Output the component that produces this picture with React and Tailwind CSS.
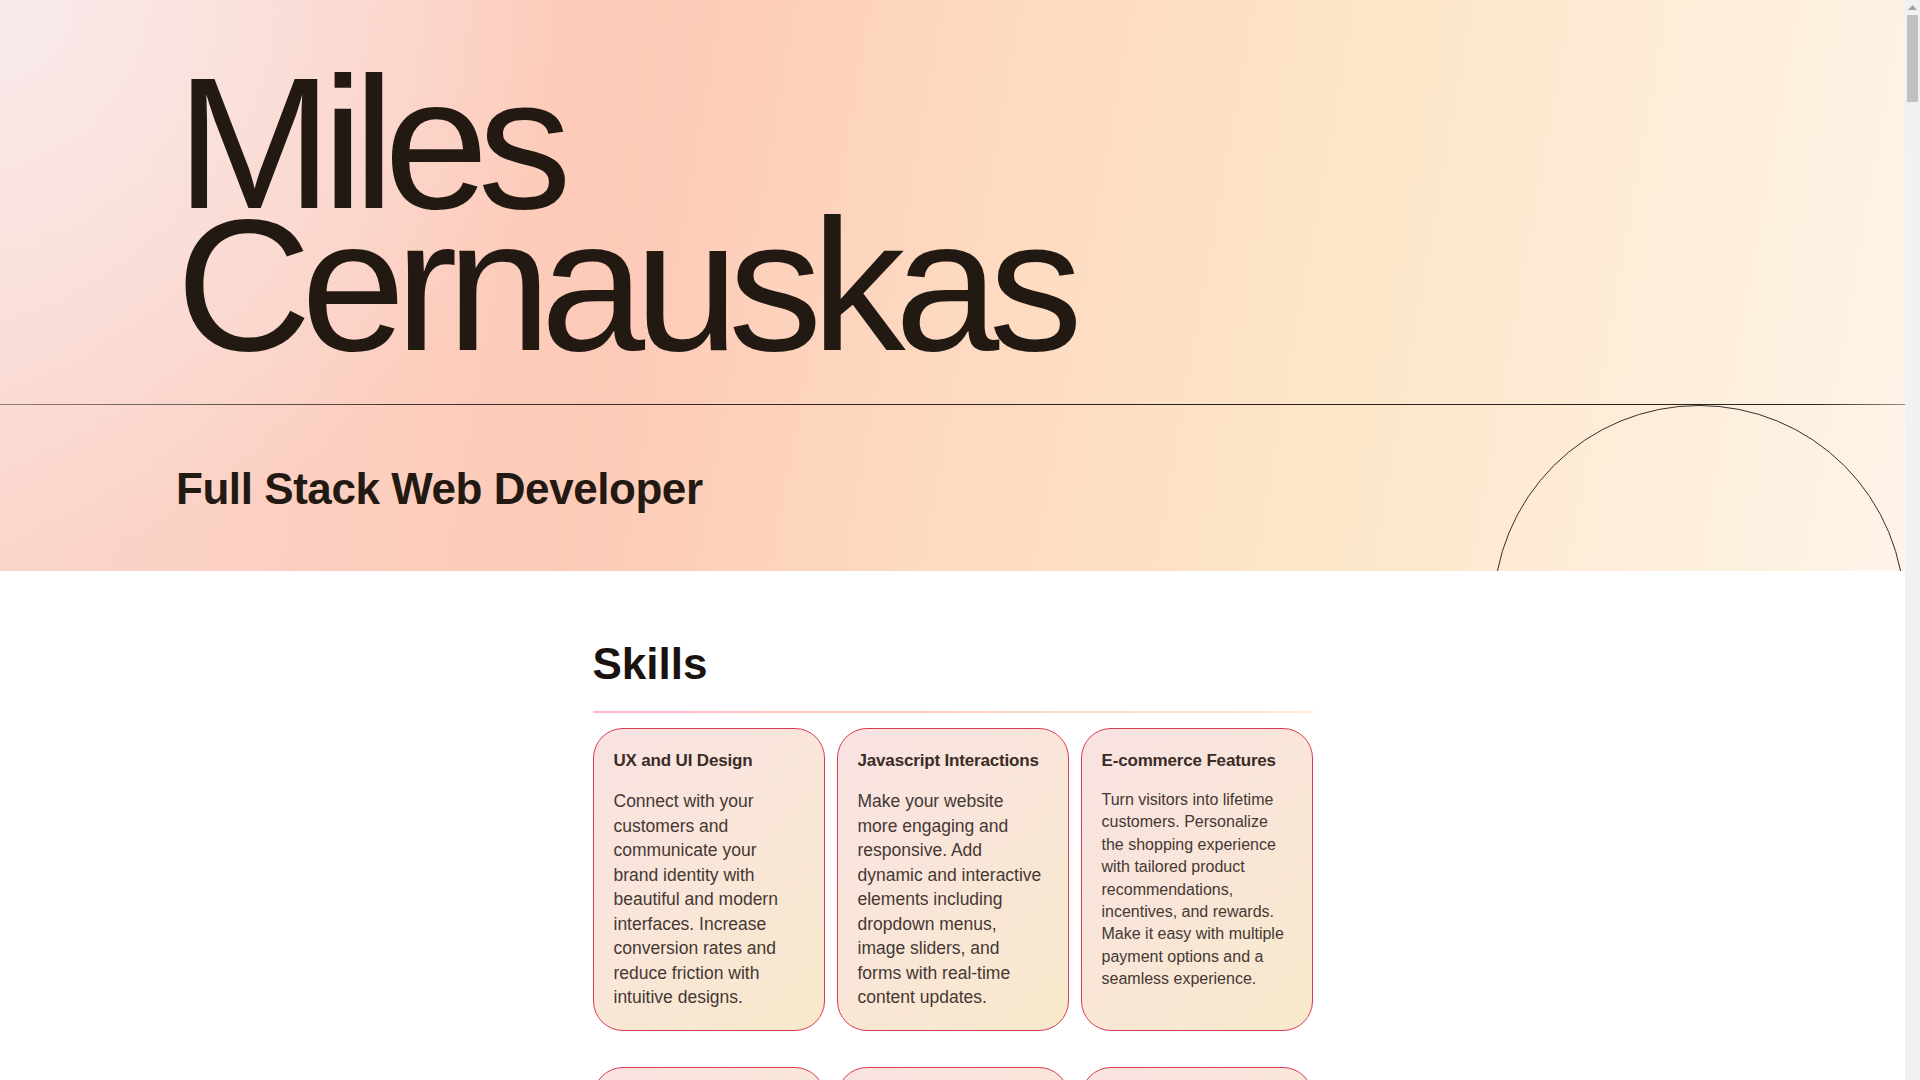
const skills = [
  {
    title: "UX and UI Design",
    body: "Connect with your customers and communicate your brand identity with beautiful and modern interfaces. Increase conversion rates and reduce friction with intuitive designs.",
    small: false,
  },
  {
    title: "Javascript Interactions",
    body: "Make your website more engaging and responsive. Add dynamic and interactive elements including dropdown menus, image sliders, and forms with real-time content updates.",
    small: false,
  },
  {
    title: "E-commerce Features",
    body: "Turn visitors into lifetime customers. Personalize the shopping experience with tailored product recommendations, incentives, and rewards. Make it easy with multiple payment options and a seamless experience.",
    small: true,
  },
  {
    title: "Responsive Layouts",
    body: "Look great on every screen. Fluid grids and flexible images keep your site fast and readable on phones, tablets and desktops.",
    small: false,
  },
  {
    title: "Performance",
    body: "Fast pages keep visitors around. Optimized assets, lazy loading and caching make every page load quickly.",
    small: false,
  },
  {
    title: "CMS Integration",
    body: "Update your content without touching code. Manage pages, posts and products from an easy to use dashboard.",
    small: true,
  },
];

function SkillCard({ title, body, small }) {
  return (
    <div className="rounded-[30px] border border-[#d93a52] bg-[linear-gradient(135deg,#f9e2e3_0%,#f9e6d8_50%,#f8e9cb_100%)] p-5">
      <h3 className="text-[17px] leading-6 font-bold tracking-[-0.01em] text-[#3a2c27]">{title}</h3>
      <p
        className={
          small
            ? "mt-4 text-[16px] leading-[22.4px] text-[#453833]"
            : "mt-4 text-[17.5px] leading-[24.5px] text-[#453833]"
        }
      >
        {body}
      </p>
    </div>
  );
}

// browser scrollbar as seen in the screenshot
function Scrollbar() {
  return (
    <aside className="flex w-[15px] shrink-0 flex-col items-center bg-[#f1f1f1]">
      <svg width="9" height="5" viewBox="0 0 9 5" className="mt-[5px]">
        <polygon points="4.5,0 9,5 0,5" fill="#a3a3a3" />
      </svg>
      <div className="mt-[5px] h-[87px] w-[11px] bg-[#c1c1c1]" />
    </aside>
  );
}

export default function App() {
  return (
    <div className="flex h-screen overflow-hidden bg-white font-['Liberation_Sans',Arial,sans-serif]">
      <main className="min-w-0 flex-1 overflow-hidden">
        {/* Hero */}
        <header className="relative h-[571px] overflow-hidden bg-[image:radial-gradient(circle_at_0%_0%,rgba(249,236,238,0.95)_0%,rgba(249,236,238,0)_28%),linear-gradient(100deg,#fad7cd_0%,#fdcab8_33%,#fdd9c0_50%,#fde6c9_70%,#fef4e8_100%)]">
          <div className="h-[404px] pl-[176px] pt-[72px]">
            <h1 className="text-[188px] leading-[142px] font-normal tracking-[-0.057em] text-[#221912]">
              Miles
              <br />
              Cernauskas
            </h1>
          </div>
          <div className="h-px bg-[linear-gradient(90deg,#8c7d77_0%,#3a2e28_25%,#2b221d_60%,#2b221d_95%,#9a8c80_100%)]" />
          <div className="flex h-[166px] items-center pl-[176px]">
            <h2 className="text-[44px] leading-[53px] font-bold tracking-[-0.01em] text-[#221912]">
              Full Stack Web Developer
            </h2>
          </div>
          <div className="absolute right-0 top-[405px] h-[412px] w-[412px] rounded-full border border-[#3a2f29]" />
        </header>

        {/* Skills */}
        <section className="mx-auto w-[720px] pt-[66px] pb-24">
          <h2 className="text-[44px] leading-[53px] font-bold text-[#1a1310]">Skills</h2>
          <div className="mt-[21px] h-[2px] bg-[linear-gradient(90deg,#ffb7c8_0%,#fdcdbd_45%,#fde3c8_80%,#fdebd9_100%)]" />
          <div className="mt-[15px] grid grid-cols-3 gap-x-3 gap-y-9">
            {skills.map((s) => (
              <SkillCard key={s.title} {...s} />
            ))}
          </div>
        </section>
      </main>
      <Scrollbar />
    </div>
  );
}
